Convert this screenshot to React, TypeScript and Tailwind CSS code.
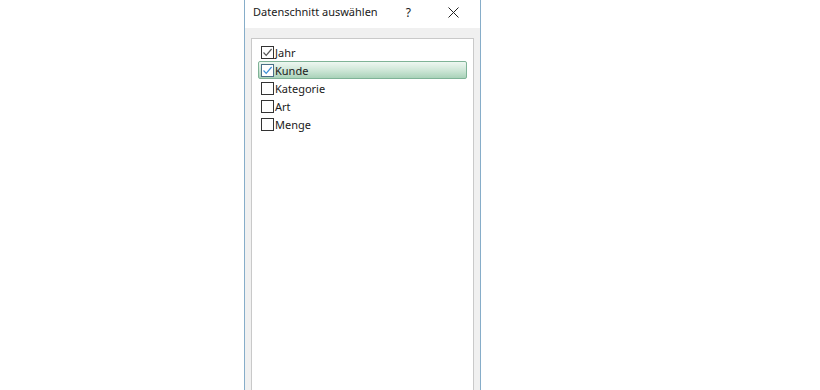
const items = [
  { label: 'Jahr', checked: true, active: false },
  { label: 'Kunde', checked: true, active: true },
  { label: 'Kategorie', checked: false, active: false },
  { label: 'Art', checked: false, active: false },
  { label: 'Menge', checked: false, active: false },
]

function CheckBox({ checked, active }: { checked: boolean; active: boolean }) {
  return (
    <span
      className={
        'flex h-[13px] w-[13px] shrink-0 items-center justify-center border bg-white ' +
        (active ? 'border-[#4a6f86]' : 'border-[#333333]')
      }
    >
      {checked && (
        <svg width="11" height="11" viewBox="0 0 11 11" fill="none">
          <path
            d="M1.5 5.5 L4.2 8.3 L9.6 2"
            stroke={active ? '#3a8fd6' : '#555555'}
            strokeWidth="1.2"
          />
        </svg>
      )}
    </span>
  )
}

export default function App() {
  return (
    <div className="h-[390px] w-[820px] overflow-hidden bg-white font-['Noto_Sans',sans-serif] text-[#1a1a1a]">
      <div className="ml-[244px] flex h-[390px] w-[237px] flex-col border-x border-x-[#86adc9] bg-[#f0f0f0]">
        <div className="flex h-[28px] shrink-0 items-center bg-white pb-[3px] pl-[8px] text-[11px]">
          <span>Datenschnitt auswählen</span>
          <span className="ml-[28px] text-[12px]">?</span>
          <svg className="ml-[37px]" width="11" height="11" viewBox="0 0 11 11">
            <path d="M0.5 0.5 L10.5 10.5 M10.5 0.5 L0.5 10.5" stroke="#222" strokeWidth="1" />
          </svg>
        </div>
        <div className="flex-1 px-[6px] pt-[10px]">
          <div className="h-full border border-b-0 border-[#c9c9c9] bg-white px-[6px] pt-[4px]">
            {items.map((item) => (
              <div
                key={item.label}
                className={
                  'flex h-[18px] items-center gap-[1px] pl-[2px] text-[11px] leading-none ' +
                  (item.active
                    ? 'rounded-[2px] border border-[#7fb397] bg-gradient-to-b from-[#eef7f1] via-[#cfe7d8] to-[#a9d2b9]'
                    : 'border border-transparent')
                }
              >
                <CheckBox checked={item.checked} active={item.active} />
                <span>{item.label}</span>
              </div>
            ))}
          </div>
        </div>
      </div>
    </div>
  )
}
